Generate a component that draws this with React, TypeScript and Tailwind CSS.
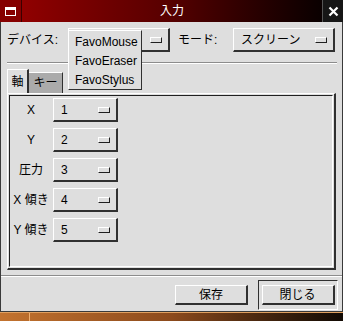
import React from 'react';

const font = { fontFamily: '"Liberation Sans", "Noto Sans CJK JP", sans-serif' };

const Indicator = () => (
  <span className="block w-[12px] h-[6px] bg-[#dedede] border-t border-l border-white border-b border-r border-b-[#202020] border-r-[#202020]" />
);

const Combo = ({ value, width, popup }: { value: string; width: string; popup?: string[] }) => (
  <div
    className={`relative h-[24px] ${width} flex items-center justify-between bg-[#dedede] border-t border-l border-white border-b-2 border-r-2 border-b-[#303030] border-r-[#303030]`}
  >
    <span className="pl-[7px] text-[12px] leading-none text-black">{popup ? '' : value}</span>
    <span className="mr-[6px]">
      <Indicator />
    </span>
    {popup && (
      <div className="absolute left-[-1px] top-[1px] w-[74px] pt-[1px] bg-[#dedede] border-t border-l border-white border-b border-r border-b-[#303030] border-r-[#303030] z-10">
        {popup.map((p) => (
          <div key={p} className="h-[19px] flex items-center pl-[6px] text-[12px] leading-none text-black">
            {p}
          </div>
        ))}
      </div>
    )}
  </div>
);

const Groove = () => (
  <div className="h-[2px] border-t border-t-[#8c8c8c] border-b border-b-white" />
);

const rows = [
  { label: 'X', value: '1' },
  { label: 'Y', value: '2' },
  { label: '圧力', value: '3' },
  { label: 'X 傾き', value: '4' },
  { label: 'Y 傾き', value: '5' },
];

const Button = ({ children }: { children: React.ReactNode }) => (
  <div className="w-[73px] h-[20px] flex items-center justify-center bg-[#dedede] border-t border-l border-white border-b-2 border-r-2 border-b-[#303030] border-r-[#303030] text-[12px] leading-none text-black">
    {children}
  </div>
);

export default function App() {
  return (
    <div className="w-[343px] h-[321px] flex flex-col overflow-hidden bg-[#dedede] select-none" style={font}>
      {/* title bar */}
      <div className="h-[22px] flex shrink-0">
        <div className="w-[22px] h-[22px] flex items-center justify-center bg-[#860000] border-r border-r-[#3a0000]">
          <span className="block w-[11px] h-[9px] border border-white border-t-[3px]" />
        </div>
        <div className="flex-1 flex items-center justify-center bg-gradient-to-r from-[#900000] via-[#560000] to-[#0a0000] text-white text-[12px] leading-none">
          入力
        </div>
        <div className="w-[21px] h-[22px] flex items-center justify-center bg-[#161616] border-l border-l-[#555]">
          <svg width="11" height="11" viewBox="0 0 11 11">
            <path d="M1.5 1.5 L9.5 9.5 M9.5 1.5 L1.5 9.5" stroke="white" strokeWidth="2.2" />
          </svg>
        </div>
      </div>

      {/* body */}
      <div className="h-[290px] shrink-0 flex flex-col border-l border-r border-b border-[#3a3a3a] pt-[6px]">
        <div className="h-[24px] flex items-center pl-[6px]">
          <span className="w-[61px] text-[12px] leading-none text-black">デバイス:</span>
          <Combo value="FavoMouse" width="w-[102px]" popup={['FavoMouse', 'FavoEraser', 'FavoStylus']} />
          <span className="ml-[8px] w-[55px] text-[12px] leading-none text-black">モード:</span>
          <Combo value="スクリーン" width="w-[102px]" />
        </div>

        <div className="mt-[10px] ml-[6px] mr-[5px]">
          <Groove />
        </div>

        {/* tabs */}
        <div className="mt-[5px] ml-[6px] h-[24px] flex items-end">
          <div className="w-[22px] h-[24px] flex items-center justify-center bg-[#dedede] border-t border-l border-white border-r-2 border-r-[#303030] text-[12px] leading-none text-black">
            軸
          </div>
          <div className="w-[34px] h-[21px] flex items-center justify-center bg-[#ababab] border-t border-white border-r border-r-[#303030] text-[12px] leading-none text-black">
            キー
          </div>
        </div>

        {/* panel */}
        <div className="ml-[6px] mr-[6px] h-[177px] border-t border-l border-white border-b-2 border-r-2 border-b-[#303030] border-r-[#303030] p-[1px]">
          <div className="h-full border-t border-l border-t-[#202020] border-l-[#202020] border-b border-r border-b-white border-r-white pt-[2px] pl-[1px] flex flex-col gap-[6px]">
            {rows.map((r) => (
              <div key={r.label} className="flex items-center h-[24px]">
                <span className="w-[40px] text-center text-[12px] leading-none text-black whitespace-nowrap">
                  {r.label}
                </span>
                <span className="ml-[2px]">
                  <Combo value={r.value} width="w-[65px]" />
                </span>
              </div>
            ))}
          </div>
        </div>

        <div className="mt-[5px]">
          <Groove />
        </div>

        {/* buttons */}
        <div className="mt-[3px] h-[30px] flex items-center justify-end pr-[4px] gap-[10px]">
          <Button>保存</Button>
          <div className="w-[80px] h-[30px] flex items-center justify-center border border-t-[#303030] border-l-[#303030] border-b-white border-r-white">
            <Button>閉じる</Button>
          </div>
        </div>
      </div>

      {/* desktop strip */}
      <div className="flex-1 flex bg-gradient-to-r from-[#c3732f] via-[#8c4a1c] to-[#120a04] border-t border-t-[#e0a060]">
        <div className="w-[30px] border-r border-r-[#f0b070]" />
      </div>
    </div>
  );
}
